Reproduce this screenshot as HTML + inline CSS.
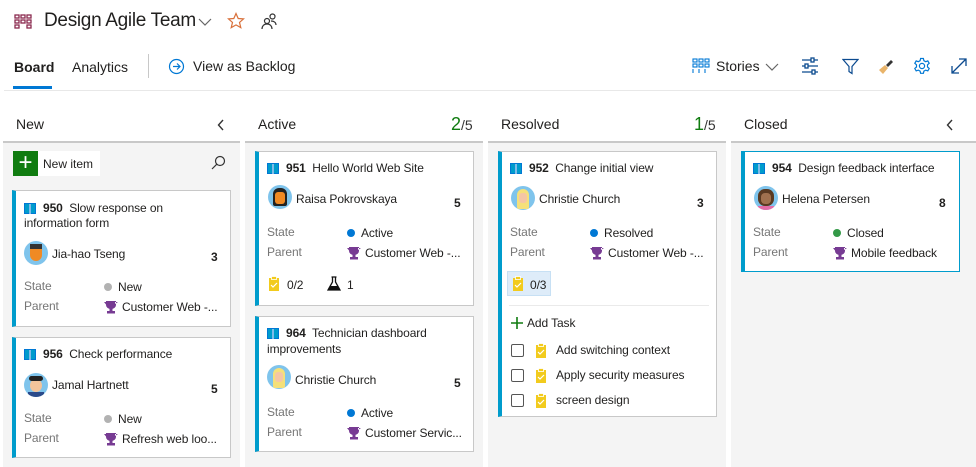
<!DOCTYPE html>
<html><head><meta charset="utf-8"><style>
*{box-sizing:border-box;margin:0;padding:0}
body{width:976px;height:467px;overflow:hidden;background:#fff;font-family:"Liberation Sans",Arial,sans-serif;color:#201f1e;position:relative;font-size:12px}
.a{position:absolute;white-space:nowrap}
.col{position:absolute;top:141px;height:326px;background:#f4f4f4;border-top:2px solid #c8c8c8}
.card{position:absolute;background:#fff;border:1px solid #c8c8c8;border-left:4px solid #009ccc;width:219px}
.card .a{font-size:12px;letter-spacing:-0.1px}
.lbl{color:#767676}
.dot{display:inline-block;width:8px;height:8px;border-radius:50%;margin-right:6px;vertical-align:0}
.av{position:absolute;width:24px;height:24px;border-radius:50%;overflow:hidden}
.hd{font-size:14px;color:#201f1e}
</style></head><body>
<svg class="a" style="left:14px;top:14px" width="18" height="16" viewBox="0 0 18 16"><g fill="none" stroke="#8a2a4e" stroke-width="1.3"><rect x="1" y="1" width="4" height="3"/><rect x="7" y="1" width="4" height="3"/><rect x="13" y="1" width="4" height="3"/><rect x="1" y="6" width="4" height="3"/><rect x="7" y="6" width="4" height="3"/><rect x="13" y="6" width="4" height="3"/><rect x="1" y="11" width="4" height="3"/><rect x="13" y="11" width="4" height="3"/></g></svg>
<div class="a" style="left:44px;top:10px;font-size:19px;letter-spacing:-0.3px">Design Agile Team</div>
<svg class="a" style="left:198px;top:17px" width="14" height="10"><path d="M1 2l6 6 6-6" fill="none" stroke="#666" stroke-width="1.2"/></svg>
<svg class="a" style="left:227px;top:12px" width="18" height="18" viewBox="0 0 18 18"><path d="M9 1.5l2.2 5 5.3.4-4 3.5 1.3 5.3L9 12.9l-4.8 2.8 1.3-5.3-4-3.5 5.3-.4z" fill="none" stroke="#d9703a" stroke-width="1.2"/></svg>
<svg class="a" style="left:260px;top:12px" width="18" height="18" viewBox="0 0 18 18"><g fill="none" stroke="#333" stroke-width="1.2"><circle cx="7" cy="9" r="2.5"/><path d="M2 17c0-3 2-5 5-5s5 2 5 5"/><circle cx="12.5" cy="4.5" r="2.5"/><path d="M11 9c3 0 5 1.5 5 4"/></g></svg>
<div class="a" style="left:14px;top:59px;font-size:14px;font-weight:bold">Board</div>
<div class="a" style="left:13px;top:86px;width:39px;height:3px;background:#0078d4"></div>
<div class="a" style="left:72px;top:59px;font-size:14px">Analytics</div>
<div class="a" style="left:148px;top:54px;width:1px;height:24px;background:#c8c8c8"></div>
<svg class="a" style="left:168px;top:58px" width="17" height="17" viewBox="0 0 17 17"><g fill="none" stroke="#0078d4" stroke-width="1.2"><circle cx="8.5" cy="8.5" r="7"/><path d="M5 8.5h7M9 5.5l3 3-3 3"/></g></svg>
<div class="a" style="left:193px;top:58px;font-size:14px">View as Backlog</div>
<div class="a" style="left:4px;top:90px;width:972px;height:1px;background:#e8e8e8"></div>
<svg class="a" style="left:692px;top:58px" width="18" height="16" viewBox="0 0 18 16"><g fill="none" stroke="#0078d4" stroke-width="1.1"><rect x="1" y="1" width="4" height="3"/><rect x="7" y="1" width="4" height="3"/><rect x="13" y="1" width="4" height="3"/><rect x="1" y="6" width="4" height="3"/><rect x="7" y="6" width="4" height="3"/><rect x="13" y="6" width="4" height="3"/><path d="M1 11v4M7 11v4M13 11v4"/></g></svg>
<div class="a" style="left:716px;top:58px;font-size:14px">Stories</div>
<svg class="a" style="left:765px;top:62px" width="14" height="10"><path d="M1 2l6 6 6-6" fill="none" stroke="#666" stroke-width="1.2"/></svg>
<svg class="a" style="left:801px;top:57px" width="18" height="18" viewBox="0 0 18 18"><g fill="none" stroke="#0b4a8f" stroke-width="1.3"><path d="M1 3h16M1 9h16M1 15h16"/><rect x="10" y="1" width="3" height="4" fill="#fff"/><rect x="4" y="7" width="3" height="4" fill="#fff"/><rect x="11" y="13" width="3" height="4" fill="#fff"/></g></svg>
<svg class="a" style="left:842px;top:58px" width="17" height="17" viewBox="0 0 17 17"><path d="M1 1.5h15l-6 7v7l-3-2v-5z" fill="none" stroke="#0b4a8f" stroke-width="1.2"/></svg>
<svg class="a" style="left:877px;top:58px" width="17" height="17" viewBox="0 0 17 17"><path d="M2 12l6-5 3 3-5 6z" fill="#e9b46a"/><path d="M9 7l5-5 2 2-5 5z" fill="#333"/></svg>
<svg class="a" style="left:913px;top:57px" width="18" height="18" viewBox="0 0 18 18"><g fill="none" stroke="#0078d4" stroke-width="1.2"><circle cx="9" cy="9" r="2.6"/><path d="M7.6 1.5h2.8l.5 2.2 1.8 1 2.1-.8 1.4 2.4-1.7 1.5v2.2l1.7 1.5-1.4 2.4-2.1-.8-1.8 1-.5 2.2H7.6l-.5-2.2-1.8-1-2.1.8-1.4-2.4 1.7-1.5V7.8L1.8 6.3l1.4-2.4 2.1.8 1.8-1z"/></g></svg>
<svg class="a" style="left:950px;top:57px" width="18" height="18" viewBox="0 0 18 18"><path d="M2 16L16 2M9 2h7v7M2 9v7h7" fill="none" stroke="#0b4a8f" stroke-width="1.3"/></svg>

<div class="a hd" style="left:16px;top:116px">New</div>
<svg class="a" style="left:217px;top:119px" width="8" height="12"><path d="M6 1L1.5 6 6 11" fill="none" stroke="#333" stroke-width="1.4"/></svg>
<div class="a hd" style="left:258px;top:116px">Active</div>
<div class="a" style="left:451px;top:114px;font-size:18px;color:#107c10">2<span style="font-size:14px;color:#333">/5</span></div>
<div class="a hd" style="left:501px;top:116px">Resolved</div>
<div class="a" style="left:694px;top:114px;font-size:18px;color:#107c10">1<span style="font-size:14px;color:#333">/5</span></div>
<div class="a hd" style="left:744px;top:116px">Closed</div>
<svg class="a" style="left:946px;top:119px" width="8" height="12"><path d="M6 1L1.5 6 6 11" fill="none" stroke="#333" stroke-width="1.4"/></svg>

<div class="col" style="left:3px;width:237px"></div>
<div class="col" style="left:245px;width:238px"></div>
<div class="col" style="left:488px;width:238px"></div>
<div class="col" style="left:731px;width:245px"></div>

<div class="a" style="left:13px;top:151px;width:87px;height:25px;background:#fff"></div>
<div class="a" style="left:13px;top:151px;width:25px;height:25px;background:#107c10;color:#fff;font-size:24px;line-height:24px;text-align:center">+</div>
<div class="a" style="left:43px;top:157px;font-size:12px">New item</div>
<svg class="a" style="left:211px;top:155px" width="15" height="15" viewBox="0 0 15 15"><g fill="none" stroke="#333" stroke-width="1.2"><circle cx="9" cy="6" r="4.5"/><path d="M5.8 9.2L1 14"/></g></svg>

<svg width="0" height="0" style="position:absolute"><defs>
<g id="bk"><path d="M0.5 1.5h5v10h-5zM6.5 1.5h5v10h-5z" fill="#009ccc" stroke="#0078d4" stroke-width="1"/><path d="M6 2v10" stroke="#fff"/></g>
<g id="tr"><path d="M2 1h10v4a5 4 0 0 1-10 0z M0 2h3v2a2 2 0 0 1-1 .5 M14 2h-3v2" fill="#773b93"/><rect x="5.5" y="8" width="3" height="3" fill="#773b93"/><rect x="3" y="11" width="8" height="2.5" fill="#773b93"/></g>
<g id="tk"><rect x="1" y="2" width="10" height="13" fill="#f2cb1d"/><rect x="3.5" y="0.5" width="5" height="3" fill="#f2cb1d" stroke="#fff" stroke-width=".8"/><path d="M3 9l2 2 4-4" fill="none" stroke="#fff" stroke-width="1.2"/></g>
</defs></svg>

<div class="card" style="left:12px;top:190px;height:137px">
<svg class="a" style="left:8px;top:11px" width="12" height="13"><use href="#bk"/></svg>
<div class="a" style="left:27px;top:10px"><b>950</b>&nbsp; Slow response on</div>
<div class="a" style="left:8px;top:25px">information form</div>
<div class="av" style="left:8px;top:50px;background:#7fc4ec"><div style="position:absolute;left:6px;top:4px;width:12px;height:16px;background:#f08a24;border-radius:4px 4px 6px 6px"></div><div style="position:absolute;left:6px;top:3px;width:12px;height:5px;background:#333"></div></div>
<div class="a" style="left:36px;top:56px">Jia-hao Tseng</div>
<div class="a" style="left:195px;top:59px;font-weight:bold">3</div>
<div class="a lbl" style="left:8px;top:88px">State</div>
<div class="a" style="left:88px;top:89px"><span class="dot" style="background:#b2b2b2"></span>New</div>
<div class="a lbl" style="left:8px;top:108px">Parent</div>
<svg class="a" style="left:88px;top:109px" width="14" height="14"><use href="#tr"/></svg>
<div class="a" style="left:106px;top:109px">Customer Web -...</div>
</div>

<div class="card" style="left:12px;top:337px;height:121px">
<svg class="a" style="left:8px;top:10px" width="12" height="13"><use href="#bk"/></svg>
<div class="a" style="left:27px;top:9px"><b>956</b>&nbsp; Check performance</div>
<div class="av" style="left:8px;top:35px;background:#7fc4ec"><div style="position:absolute;left:6px;top:6px;width:12px;height:13px;background:#f2c49b;border-radius:50%"></div><div style="position:absolute;left:5px;top:3px;width:14px;height:5px;background:#222;border-radius:4px"></div><div style="position:absolute;left:4px;top:19px;width:16px;height:6px;background:#2b4a8a"></div></div>
<div class="a" style="left:36px;top:40px">Jamal Hartnett</div>
<div class="a" style="left:195px;top:44px;font-weight:bold">5</div>
<div class="a lbl" style="left:8px;top:73px">State</div>
<div class="a" style="left:88px;top:74px"><span class="dot" style="background:#b2b2b2"></span>New</div>
<div class="a lbl" style="left:8px;top:93px">Parent</div>
<svg class="a" style="left:88px;top:94px" width="14" height="14"><use href="#tr"/></svg>
<div class="a" style="left:106px;top:94px">Refresh web loo...</div>
</div>

<div class="card" style="left:255px;top:151px;height:155px">
<svg class="a" style="left:8px;top:10px" width="12" height="13"><use href="#bk"/></svg>
<div class="a" style="left:27px;top:9px"><b>951</b>&nbsp; Hello World Web Site</div>
<div class="av" style="left:9px;top:33px;background:#7fc4ec"><div style="position:absolute;left:5px;top:3px;width:14px;height:18px;background:#222;border-radius:6px 6px 2px 2px"></div><div style="position:absolute;left:7px;top:7px;width:10px;height:12px;background:#f08a24;border-radius:3px"></div></div>
<div class="a" style="left:37px;top:40px">Raisa Pokrovskaya</div>
<div class="a" style="left:195px;top:44px;font-weight:bold">5</div>
<div class="a lbl" style="left:8px;top:73px">State</div>
<div class="a" style="left:88px;top:74px"><span class="dot" style="background:#0078d4"></span>Active</div>
<div class="a lbl" style="left:8px;top:93px">Parent</div>
<svg class="a" style="left:88px;top:94px" width="14" height="14"><use href="#tr"/></svg>
<div class="a" style="left:106px;top:94px">Customer Web -...</div>
<svg class="a" style="left:9px;top:124px" width="12" height="16"><use href="#tk"/></svg>
<div class="a" style="left:28px;top:126px">0/2</div>
<svg class="a" style="left:68px;top:124px" width="14" height="15" viewBox="0 0 14 15"><path d="M4.5 1h5M5.5 1v5L1 14h12L8.5 6V1" fill="#fff" stroke="#111" stroke-width="1.3"/><path d="M3 10h8l2 4H1z" fill="#111"/></svg>
<div class="a" style="left:88px;top:126px">1</div>
</div>

<div class="card" style="left:255px;top:316px;height:136px">
<svg class="a" style="left:8px;top:10px" width="12" height="13"><use href="#bk"/></svg>
<div class="a" style="left:27px;top:9px"><b>964</b>&nbsp; Technician dashboard</div>
<div class="a" style="left:8px;top:25px">improvements</div>
<div class="av" style="left:8px;top:48px;background:#7fc4ec"><div style="position:absolute;left:6px;top:3px;width:12px;height:20px;background:#f5e07a;border-radius:6px 6px 2px 2px"></div><div style="position:absolute;left:8px;top:7px;width:8px;height:10px;background:#f5c6a5;border-radius:3px"></div></div>
<div class="a" style="left:36px;top:56px">Christie Church</div>
<div class="a" style="left:195px;top:59px;font-weight:bold">5</div>
<div class="a lbl" style="left:8px;top:88px">State</div>
<div class="a" style="left:88px;top:89px"><span class="dot" style="background:#0078d4"></span>Active</div>
<div class="a lbl" style="left:8px;top:108px">Parent</div>
<svg class="a" style="left:88px;top:109px" width="14" height="14"><use href="#tr"/></svg>
<div class="a" style="left:106px;top:109px">Customer Servic...</div>
</div>

<div class="card" style="left:498px;top:151px;height:266px">
<svg class="a" style="left:8px;top:10px" width="12" height="13"><use href="#bk"/></svg>
<div class="a" style="left:27px;top:9px"><b>952</b>&nbsp; Change initial view</div>
<div class="av" style="left:9px;top:34px;background:#7fc4ec"><div style="position:absolute;left:6px;top:3px;width:12px;height:20px;background:#f5e07a;border-radius:6px 6px 2px 2px"></div><div style="position:absolute;left:8px;top:7px;width:8px;height:10px;background:#f5c6a5;border-radius:3px"></div></div>
<div class="a" style="left:37px;top:40px">Christie Church</div>
<div class="a" style="left:195px;top:44px;font-weight:bold">3</div>
<div class="a lbl" style="left:8px;top:73px">State</div>
<div class="a" style="left:88px;top:74px"><span class="dot" style="background:#0078d4"></span>Resolved</div>
<div class="a lbl" style="left:8px;top:93px">Parent</div>
<svg class="a" style="left:88px;top:94px" width="14" height="14"><use href="#tr"/></svg>
<div class="a" style="left:106px;top:94px">Customer Web -...</div>
<div class="a" style="left:5px;top:119px;width:44px;height:25px;background:#deecf9;border:1px solid #c7e0f4"></div>
<svg class="a" style="left:10px;top:124px" width="12" height="16"><use href="#tk"/></svg>
<div class="a" style="left:28px;top:126px">0/3</div>
<div class="a" style="left:7px;top:153px;width:200px;height:1px;background:#eaeaea"></div>
<svg class="a" style="left:9px;top:165px" width="12" height="12"><path d="M6 0v12M0 6h12" stroke="#107c10" stroke-width="1.6"/></svg>
<div class="a" style="left:25px;top:164px">Add Task</div>
<div class="a" style="left:9px;top:192px;width:13px;height:13px;border:1px solid #555;border-radius:2px"></div>
<svg class="a" style="left:33px;top:191px" width="12" height="16"><use href="#tk"/></svg>
<div class="a" style="left:54px;top:191px">Add switching context</div>
<div class="a" style="left:9px;top:217px;width:13px;height:13px;border:1px solid #555;border-radius:2px"></div>
<svg class="a" style="left:33px;top:216px" width="12" height="16"><use href="#tk"/></svg>
<div class="a" style="left:54px;top:216px">Apply security measures</div>
<div class="a" style="left:9px;top:242px;width:13px;height:13px;border:1px solid #555;border-radius:2px"></div>
<svg class="a" style="left:33px;top:241px" width="12" height="16"><use href="#tk"/></svg>
<div class="a" style="left:54px;top:241px">screen design</div>
</div>

<div class="card" style="left:741px;top:151px;height:121px;border:1px solid #009ccc;border-left:4px solid #009ccc">
<svg class="a" style="left:8px;top:10px" width="12" height="13"><use href="#bk"/></svg>
<div class="a" style="left:27px;top:9px"><b>954</b>&nbsp; Design feedback interface</div>
<div class="av" style="left:9px;top:34px;background:#7fc4ec"><div style="position:absolute;left:4px;top:3px;width:16px;height:17px;background:#5a3a22;border-radius:7px"></div><div style="position:absolute;left:7px;top:7px;width:10px;height:11px;background:#a0714f;border-radius:4px"></div><div style="position:absolute;left:4px;top:20px;width:16px;height:5px;background:#e36ca8"></div></div>
<div class="a" style="left:37px;top:40px">Helena Petersen</div>
<div class="a" style="left:194px;top:44px;font-weight:bold">8</div>
<div class="a lbl" style="left:8px;top:73px">State</div>
<div class="a" style="left:88px;top:74px"><span class="dot" style="background:#339947"></span>Closed</div>
<div class="a lbl" style="left:8px;top:93px">Parent</div>
<svg class="a" style="left:88px;top:94px" width="14" height="14"><use href="#tr"/></svg>
<div class="a" style="left:106px;top:94px">Mobile feedback</div>
</div>
</body></html>
